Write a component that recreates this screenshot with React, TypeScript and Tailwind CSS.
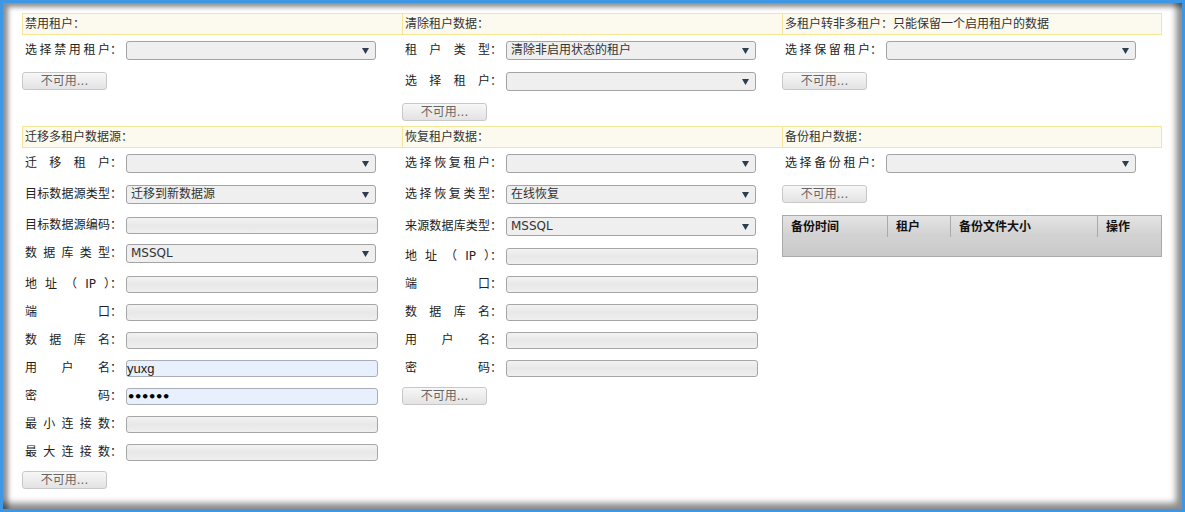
type Row =
  | { label: string; kind: "select"; value?: string; mt: string }
  | { label: string; kind: "input"; value?: string; mt: string }
  | { label: string; kind: "autofill"; value: string; mt: string }
  | { label: string; kind: "password"; mt: string }

type Column = {
  title: string
  rows: Row[]
  buttonMt: string
  table?: boolean
}

const top: Column[] = [
  {
    title: "禁用租户：",
    rows: [{ label: "选择禁用租户：", kind: "select", mt: "mt-[6px]" }],
    buttonMt: "mt-[12px]",
  },
  {
    title: "清除租户数据：",
    rows: [
      { label: "租户类型：", kind: "select", value: "清除非启用状态的租户", mt: "mt-[6px]" },
      { label: "选择租户：", kind: "select", mt: "mt-[12px]" },
    ],
    buttonMt: "mt-[12px]",
  },
  {
    title: "多租户转非多租户：只能保留一个启用租户的数据",
    rows: [{ label: "选择保留租户：", kind: "select", mt: "mt-[6px]" }],
    buttonMt: "mt-[12px]",
  },
]

const bottom: Column[] = [
  {
    title: "迁移多租户数据源：",
    rows: [
      { label: "迁移租户：", kind: "select", mt: "mt-[6px]" },
      { label: "目标数据源类型：", kind: "select", value: "迁移到新数据源", mt: "mt-[12px]" },
      { label: "目标数据源编码：", kind: "input", mt: "mt-[13px]" },
      { label: "数据库类型：", kind: "select", value: "MSSQL", mt: "mt-[10px]" },
      { label: "地址（IP）：", kind: "input", mt: "mt-[13px]" },
      { label: "端口：", kind: "input", mt: "mt-[11px]" },
      { label: "数据库名：", kind: "input", mt: "mt-[11px]" },
      { label: "用户名：", kind: "autofill", value: "yuxg", mt: "mt-[11px]" },
      { label: "密码：", kind: "password", mt: "mt-[11px]" },
      { label: "最小连接数：", kind: "input", mt: "mt-[11px]" },
      { label: "最大连接数：", kind: "input", mt: "mt-[11px]" },
    ],
    buttonMt: "mt-[10px]",
  },
  {
    title: "恢复租户数据：",
    rows: [
      { label: "选择恢复租户：", kind: "select", mt: "mt-[6px]" },
      { label: "选择恢复类型：", kind: "select", value: "在线恢复", mt: "mt-[12px]" },
      { label: "来源数据库类型：", kind: "select", value: "MSSQL", mt: "mt-[13px]" },
      { label: "地址（IP）：", kind: "input", mt: "mt-[12px]" },
      { label: "端口：", kind: "input", mt: "mt-[11px]" },
      { label: "数据库名：", kind: "input", mt: "mt-[11px]" },
      { label: "用户名：", kind: "input", mt: "mt-[11px]" },
      { label: "密码：", kind: "input", mt: "mt-[11px]" },
    ],
    buttonMt: "mt-[10px]",
  },
  {
    title: "备份租户数据：",
    rows: [{ label: "选择备份租户：", kind: "select", mt: "mt-[6px]" }],
    buttonMt: "mt-[12px]",
    table: true,
  },
]

// split a label into spread-out pieces; latin runs stay together and the
// trailing colon sticks to the last piece
function labelParts(label: string) {
  const body = label.endsWith("：") ? label.slice(0, -1) : label
  const parts: string[] = []
  for (const ch of Array.from(body)) {
    const last = parts[parts.length - 1]
    if (last && /^[A-Za-z]+$/.test(last) && /[A-Za-z]/.test(ch)) {
      parts[parts.length - 1] = last + ch
    } else {
      parts.push(ch)
    }
  }
  parts[parts.length - 1] += "："
  return parts
}

function Header({ title, last }: { title: string; last: boolean }) {
  return (
    <div
      className={
        last
          ? "h-[22px] border border-[#f6e597] bg-[#fcfaef] pl-[2px] text-[12px] leading-[20px] text-[#333]"
          : "h-[22px] border-y border-l border-[#f6e597] bg-[#fcfaef] pl-[2px] text-[12px] leading-[20px] text-[#333]"
      }
    >
      {title}
    </div>
  )
}

function Select({ value }: { value?: string }) {
  return (
    <div className="flex h-[19px] w-[250px] items-center rounded-[3px] border border-[#a3a3a3] bg-[#efefef] pl-[4px] text-[12px] text-[#333]">
      <span className="flex-1 leading-[17px]">{value}</span>
      <svg className="mr-[6px]" width="7" height="6" viewBox="0 0 7 6">
        <polygon points="0,0 7,0 3.5,6" fill="#2c3e50" />
      </svg>
    </div>
  )
}

function Control({ row }: { row: Row }) {
  if (row.kind === "select") return <Select value={row.value} />

  if (row.kind === "autofill") {
    return (
      <div className="h-[17px] w-[252px] rounded-[3px] border border-[#a9adb5] bg-[#e8f0fe] font-['Liberation_Sans',sans-serif] text-[13px] leading-[15px] text-[#222]">
        {row.value}
      </div>
    )
  }

  if (row.kind === "password") {
    return (
      <div className="h-[17px] w-[252px] rounded-[3px] border border-[#a9adb5] bg-[#e8f0fe] font-['DejaVu_Sans',sans-serif] text-[13px] font-bold leading-[15px] tracking-[-1.3px] text-black">
        ••••••
      </div>
    )
  }

  return (
    <div className="h-[17px] w-[252px] rounded-[3px] border border-[#a6a6a6] bg-gradient-to-b from-[#f3f3f3] via-[#e8e8e8] to-[#efefef]" />
  )
}

function Field({ row }: { row: Row }) {
  return (
    <div className={`flex items-center ${row.mt}`}>
      <div className="ml-[3px] mr-[4px] flex w-[97px] justify-between whitespace-nowrap text-[12px] leading-[17px] text-[#222]">
        {labelParts(row.label).map((p, i) => (
          <span key={i}>{p}</span>
        ))}
      </div>
      <Control row={row} />
    </div>
  )
}

function DisabledButton({ mt }: { mt: string }) {
  return (
    <div className={`${mt} h-[18px] w-[85px] rounded-[3px] border border-[#c8c8c8] bg-gradient-to-b from-[#f7f7f7] to-[#e3e3e3] text-center text-[12px] leading-[16px] text-[#666]`}>
      不可用...
    </div>
  )
}

function BackupTable() {
  return (
    <div className="mt-[12px] border border-[#aaaaaa]">
      <div className="flex h-[21px] bg-gradient-to-b from-[#e4e4e4] to-[#d0d0d0] text-[12px] font-bold leading-[22px] text-[#111]">
        <div className="w-[105px] border-r border-[#aaaaaa] pl-[8px]">备份时间</div>
        <div className="w-[63px] border-r border-[#aaaaaa] pl-[8px]">租户</div>
        <div className="w-[147px] border-r border-[#aaaaaa] pl-[8px]">备份文件大小</div>
        <div className="flex-1 pl-[8px]">操作</div>
      </div>
      <div className="h-[19px] bg-gradient-to-b from-[#d2d2d2] to-[#c9c9c9]" />
    </div>
  )
}

function Section({ columns, className }: { columns: Column[]; className: string }) {
  return (
    <div className={`grid grid-cols-[380px_380px_380px] items-start ${className}`}>
      {columns.map((col, i) => (
        <div key={col.title}>
          <Header title={col.title} last={i === columns.length - 1} />
          {col.rows.map((row) => (
            <Field key={row.label} row={row} />
          ))}
          <DisabledButton mt={col.buttonMt} />
          {col.table && <BackupTable />}
        </div>
      ))}
    </div>
  )
}

export default function App() {
  return (
    <div className="h-[512px] w-[1185px] bg-[#3d97e5] p-[3px] font-['DejaVu_Sans','Noto_Sans_CJK_SC',sans-serif]">
      <div className="h-full bg-white pl-[19px] pt-[10px] shadow-[inset_5px_4px_5px_rgba(0,0,0,0.45),inset_-6px_-6px_6px_rgba(0,0,0,0.45)]">
        <Section columns={top} className="" />
        <Section columns={bottom} className="mt-[5px]" />
      </div>
    </div>
  )
}
